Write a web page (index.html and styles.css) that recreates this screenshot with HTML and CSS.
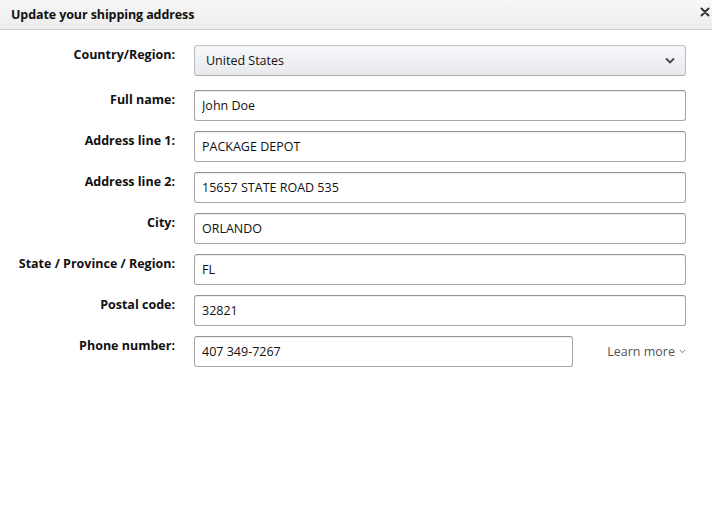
FILE: index.html
```html
<!DOCTYPE html>
<html lang="en">
  <head>
    <meta charset="UTF-8" />
    <meta name="viewport" content="width=device-width, initial-scale=1.0" />
    <title>Update your shipping address</title>
    <link rel="stylesheet" href="styles.css">
  </head>
  <body>
    <div class="popover">
      <div class="popover-header">
        <h4 class="popover-title">Update your shipping address</h4>
        <button class="close-btn" type="button" aria-label="Close">
          <svg width="10" height="10" viewBox="0 0 10 10">
            <path d="M1.5 1.5 L8.5 8.5 M8.5 1.5 L1.5 8.5" stroke="#333" stroke-width="2" stroke-linecap="round" />
          </svg>
        </button>
      </div>

      <form class="address-form">
        <div class="form-row first">
          <label class="form-label">Country/Region:</label>
          <div class="select-box">
            <span>United States</span>
            <svg width="10" height="7" viewBox="0 0 10 7">
              <path d="M1 1.5 L5 5.5 L9 1.5" fill="none" stroke="#444" stroke-width="1.8" />
            </svg>
          </div>
        </div>

        <div class="form-row">
          <label class="form-label">Full name:</label>
          <input class="form-input" type="text" value="John Doe" />
        </div>

        <div class="form-row">
          <label class="form-label">Address line 1:</label>
          <input class="form-input" type="text" value="PACKAGE DEPOT" />
        </div>

        <div class="form-row">
          <label class="form-label">Address line 2:</label>
          <input class="form-input" type="text" value="15657 STATE ROAD 535" />
        </div>

        <div class="form-row">
          <label class="form-label">City:</label>
          <input class="form-input" type="text" value="ORLANDO" />
        </div>

        <div class="form-row">
          <label class="form-label">State / Province / Region:</label>
          <input class="form-input" type="text" value="FL" />
        </div>

        <div class="form-row">
          <label class="form-label">Postal code:</label>
          <input class="form-input" type="text" value="32821" />
        </div>

        <div class="form-row">
          <label class="form-label">Phone number:</label>
          <div class="phone-wrap">
            <input class="form-input phone" type="text" value="407 349-7267" />
            <a class="learn-more" href="#">Learn more
              <svg width="7" height="5" viewBox="0 0 7 5">
                <path d="M0.8 1 L3.5 3.7 L6.2 1" fill="none" stroke="#777" stroke-width="1" />
              </svg>
            </a>
          </div>
        </div>
      </form>
    </div>
  </body>
</html>
```

FILE: styles.css
```css
body {
  margin: 0;
  background: #fff;
  font-family: "Open Sans", "Liberation Sans", Arial, sans-serif;
  color: #111;
}

.popover {
  width: 712px;
  height: 529px;
}

/* 상단 헤더 */
.popover-header {
  height: 29px;
  display: flex;
  align-items: center;
  justify-content: space-between;
  padding: 0 1px 0 11px;
  background: linear-gradient(to bottom, #f7f7f7, #ececec);
  border-bottom: 1px solid #cfcfcf;
}
.popover-title {
  margin: 0;
  font-size: 12.5px;
  font-weight: 700;
  letter-spacing: -0.1px;
  color: #111;
}
.close-btn {
  border: 0;
  background: none;
  padding: 0;
  width: 12px;
  height: 12px;
  display: flex;
  align-items: center;
  justify-content: center;
  margin-top: -5px;
}

/* 폼 영역 */
.address-form {
  padding-top: 15px;
}
.form-row {
  display: grid;
  grid-template-columns: 175px 492px;
  column-gap: 19px;
  margin-bottom: 10px;
}
.form-row.first {
  margin-bottom: 14px;
}
.form-label {
  text-align: right;
  font-size: 12.5px;
  font-weight: 700;
  line-height: 19px;
  color: #111;
}

.form-input {
  box-sizing: border-box;
  width: 100%;
  height: 31px;
  margin: 0;
  padding: 0 7px;
  border: 1px solid #a6a6a6;
  border-top-color: #949494;
  border-radius: 3px;
  font-family: inherit;
  font-size: 12.5px;
  color: #111;
  box-shadow: 0 1px 0 rgba(0, 0, 0, 0.07) inset;
  outline: none;
}

.select-box {
  box-sizing: border-box;
  height: 31px;
  display: flex;
  align-items: center;
  justify-content: space-between;
  padding: 0 10px 0 11px;
  border: 1px solid #bbb;
  border-color: #c5c5c5 #bbb #aaa;
  border-radius: 3px;
  background: linear-gradient(to bottom, #f7f8fa, #e7e9ec);
  font-size: 12.5px;
  color: #111;
}

.phone-wrap {
  display: flex;
  align-items: center;
  justify-content: space-between;
}
.form-input.phone {
  width: 379px;
}
.learn-more {
  display: flex;
  align-items: center;
  gap: 4px;
  font-size: 12.5px;
  color: #555;
  text-decoration: none;
}
```
